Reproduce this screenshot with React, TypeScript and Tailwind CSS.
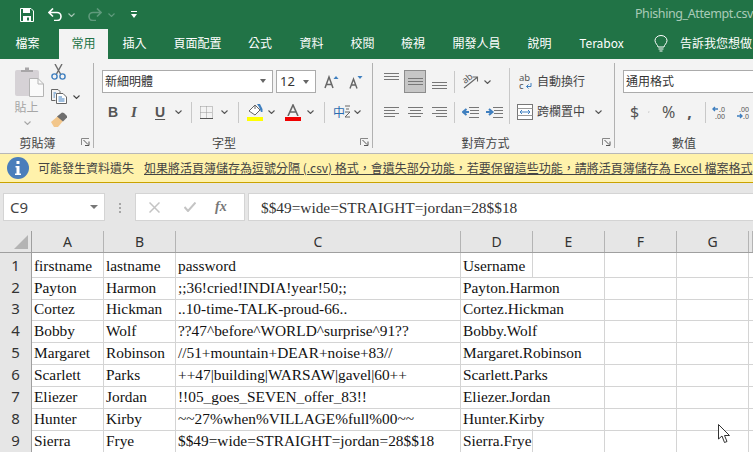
import React from 'react';

const UI_FONT = "font-['Noto_Sans_CJK_TC','Noto_Sans',sans-serif]";

const rows = [
  ['firstname', 'lastname', 'password', 'Username'],
  ['Payton', 'Harmon', ';;36!cried!INDIA!year!50;;', 'Payton.Harmon'],
  ['Cortez', 'Hickman', '..10-time-TALK-proud-66..', 'Cortez.Hickman'],
  ['Bobby', 'Wolf', '??47^before^WORLD^surprise^91??', 'Bobby.Wolf'],
  ['Margaret', 'Robinson', '//51+mountain+DEAR+noise+83//', 'Margaret.Robinson'],
  ['Scarlett', 'Parks', '++47|building|WARSAW|gavel|60++', 'Scarlett.Parks'],
  ['Eliezer', 'Jordan', '!!05_goes_SEVEN_offer_83!!', 'Eliezer.Jordan'],
  ['Hunter', 'Kirby', '~~27%when%VILLAGE%full%00~~', 'Hunter.Kirby'],
  ['Sierra', 'Frye', '$$49=wide=STRAIGHT=jordan=28$$18', 'Sierra.Frye'],
];

const tabs = [
  { label: '檔案', cls: 'w-[55px] mr-[4px]' },
  { label: '常用', cls: 'w-[49px] bg-[#f3f3f3] text-[#217346]' },
  { label: '插入', cls: 'w-[53px]' },
  { label: '頁面配置', cls: 'w-[73px]' },
  { label: '公式', cls: 'w-[52px]' },
  { label: '資料', cls: 'w-[51px]' },
  { label: '校閱', cls: 'w-[51px]' },
  { label: '檢視', cls: 'w-[50px]' },
  { label: '開發人員', cls: 'w-[77px]' },
  { label: '說明', cls: 'w-[49px]' },
  { label: 'Terabox', cls: 'w-[75px]' },
];

function Chevron({ className = '', color = '#555' }: { className?: string; color?: string }) {
  return (
    <svg width="7" height="4" viewBox="0 0 7 4" className={className}>
      <path d="M0.5 0.5 L3.5 3.5 L6.5 0.5" fill="none" stroke={color} strokeWidth="1.1" />
    </svg>
  );
}

function Launcher() {
  return (
    <svg width="9" height="8" viewBox="0 0 9 8">
      <path d="M0.5 7 V0.5 H8" fill="none" stroke="#888" />
      <path d="M2.5 2 L7 6.5 M4 7.5 H8 V3.5" fill="none" stroke="#555" />
    </svg>
  );
}

function Lines({ widths, color = '#777', gap = 3 }: { widths: number[]; color?: string; gap?: number }) {
  return (
    <svg width="15" height={(widths.length - 1) * gap + 1}>
      {widths.map((w, i) => (
        <rect key={i} x={(15 - w) / 2} y={i * gap} width={w} height="1" fill={color} />
      ))}
    </svg>
  );
}

function AlignH({ side }: { side: 'left' | 'center' | 'right' }) {
  const short = [15, 11, 15, 11];
  return (
    <svg width="15" height="11">
      {short.map((w, i) => {
        const x = side === 'left' ? 0 : side === 'right' ? 15 - w : (15 - w) / 2;
        return <rect key={i} x={x} y={i * 3} width={w} height="1" fill="#777" />;
      })}
    </svg>
  );
}

function Indent({ flip }: { flip?: boolean }) {
  return (
    <svg width="17" height="11" viewBox="0 0 17 11">
      <g fill="#777">
        <rect x="7" y="0" width="10" height="1" />
        <rect x="8" y="3" width="9" height="1" />
        <rect x="8" y="6" width="9" height="1" />
        <rect x="7" y="10" width="10" height="1" />
      </g>
      {flip ? (
        <path d="M0 5 H5 M3 2 L6.5 5 L3 8" fill="none" stroke="#3f7fbf" strokeWidth="2" />
      ) : (
        <path d="M7 5 H2 M4.5 2 L1 5 L4.5 8" fill="none" stroke="#3f7fbf" strokeWidth="2" />
      )}
    </svg>
  );
}

function VSep({ className = '' }: { className?: string }) {
  return <div className={`w-px bg-[#c8c8c8] ${className}`} />;
}

function GroupLabel({ text, launcher, className = '' }: { text: string; launcher?: boolean; className?: string }) {
  return (
    <div className={`absolute bottom-0 left-0 right-0 h-[19px] pb-[2px] flex items-center justify-center text-[12px] text-[#444] ${className}`}>
      <span>{text}</span>
      {launcher && (
        <span className="absolute right-[3px] top-[4px] flex">
          <Launcher />
        </span>
      )}
    </div>
  );
}

function ClipboardGroup() {
  return (
    <div className="relative w-[93px] h-full flex shrink-0">
      <div className="w-[51px] pl-[15px] pt-[8px] flex flex-col">
        <svg width="29" height="30" viewBox="0 0 29 30">
          <rect x="0" y="3" width="24" height="26" rx="2" fill="#d6d2d6" />
          <path d="M6 5 V3 H10 V0.5 H14 V3 H18 V5 Z" fill="#a8a6a8" />
          <path d="M14.5 11.5 H23 L28.5 17 V29.5 H14.5 Z" fill="#fafafa" stroke="#b4b4b4" />
          <path d="M23 11.5 V17 H28.5" fill="none" stroke="#b4b4b4" />
        </svg>
        <div className="text-[12px] leading-[14px] text-[#a6a6a6] mt-[3px] -ml-[0.5px]">貼上</div>
        <Chevron className="mt-[7px] ml-[9px]" color="#a6a6a6" />
      </div>
      <div className="pt-[5px] flex flex-col">
        <svg width="15" height="16" viewBox="0 0 15 16">
          <path d="M4 0 L9.5 10 M11 0 L5.5 10" stroke="#6b6b6b" strokeWidth="1.4" fill="none" />
          <circle cx="3.5" cy="12.5" r="2.6" fill="none" stroke="#3f7fbf" strokeWidth="1.4" />
          <circle cx="11.5" cy="12.5" r="2.6" fill="none" stroke="#3f7fbf" strokeWidth="1.4" />
        </svg>
        <div className="flex items-center mt-[9px]">
          <svg width="16" height="15" viewBox="0 0 16 15">
            <path d="M0.5 0.5 H7 L9 2.5 V4 M4.5 11.5 H0.5 V0.5" fill="none" stroke="#666" />
            <path d="M5.5 4.5 H12 L15.5 8 V14.5 H5.5 Z" fill="#fff" stroke="#666" />
            <path d="M7.5 8 H11 M7.5 10 H13.5 M7.5 12 H13.5 M2.5 4 H5 M2.5 6 H4 M2.5 8 H4" stroke="#3f7fbf" />
          </svg>
          <Chevron className="ml-[6px]" color="#444" />
        </div>
        <svg width="17" height="15" viewBox="0 0 17 15" className="mt-[8px]">
          <path d="M0 10 L7 4 L12 9 L7 15 L3 15 Z" fill="#f2c68b" />
          <path d="M6 4.5 L11 0.5 L13 1 L16 4 L16 5.5 L12 9.5 Z" fill="#6e6e6e" />
        </svg>
      </div>
      <GroupLabel text="剪貼簿" launcher className="pr-[18px]" />
    </div>
  );
}

function FontGroup() {
  return (
    <div className="relative w-[278px] h-full pt-[11px] pl-[8px] shrink-0">
      <div className="flex items-center h-[23px]">
        <div className="w-[171px] h-[23px] bg-white border border-[#ababab] flex items-center justify-between pl-[2px] pr-[6px] pb-[2px] text-[12px] text-[#333]">
          <span>新細明體</span>
          <span className="w-0 h-0 border-x-[3.5px] border-x-transparent border-t-[4px] border-t-[#666]" />
        </div>
        <div className="w-[40px] h-[23px] ml-[3px] bg-white border border-[#ababab] flex items-center justify-between pl-[3px] pr-[6px] text-[13px] text-[#333]">
          <span className="font-['Noto_Sans',sans-serif]">12</span>
          <span className="w-0 h-0 border-x-[3.5px] border-x-transparent border-t-[4px] border-t-[#666]" />
        </div>
        <svg width="15" height="14" viewBox="0 0 15 14" className="ml-[8px]">
          <path d="M1 13 L5 2 L9 13 M2.5 9.5 H7.5" fill="none" stroke="#666" strokeWidth="1.5" />
          <path d="M9.5 4 L12 1 L14.5 4 Z" fill="#3f7fbf" />
        </svg>
        <svg width="14" height="14" viewBox="0 0 14 14" className="ml-[10px]">
          <path d="M1 13.5 L4.5 4 L8 13.5 M2 10 H7" fill="none" stroke="#666" strokeWidth="1.4" />
          <path d="M8.5 1 L11 4 L13.5 1 Z" fill="#3f7fbf" />
        </svg>
      </div>
      <div className="flex items-center h-[24px] mt-[7px] text-[#555]">
        <span className="w-[9px] ml-[6px] font-['Liberation_Sans',sans-serif] font-bold text-[14px] leading-none">B</span>
        <span className="w-[9px] ml-[14px] font-['Liberation_Serif',serif] italic font-bold text-[15px] leading-none">I</span>
        <span className="w-[10px] ml-[15px] font-['Liberation_Sans',sans-serif] font-bold text-[14px] leading-none underline underline-offset-2">U</span>
        <Chevron className="ml-[10px]" />
        <VSep className="h-[21px] ml-[9px]" />
        <svg width="13" height="13" viewBox="0 0 13 13" className="ml-[8px]">
          <path d="M0.5 0.5 H12.5 M0.5 6.5 H12.5 M0.5 0.5 V12.5 M6.5 0.5 V12.5 M12.5 0.5 V12.5" fill="none" stroke="#999" strokeDasharray="1 1" />
          <path d="M0 12.5 H13" stroke="#555" />
        </svg>
        <Chevron className="ml-[8px]" />
        <VSep className="h-[21px] ml-[10px]" />
        <div className="ml-[7px] w-[17px] flex flex-col items-center">
          <svg width="16" height="13" viewBox="0 0 16 13">
            <path d="M2 7 L8 1 L13 6 L8 11 Z" fill="#fff" stroke="#666" />
            <path d="M8 1 V5" stroke="#666" />
            <path d="M10 0 H13 L15.5 5 V8 H14 L12 3 Z" fill="#3f7fbf" />
          </svg>
          <div className="w-[16px] h-[4px] bg-[#ffff00]" />
        </div>
        <Chevron className="ml-[5px]" />
        <div className="ml-[10px] w-[16px] flex flex-col items-center">
          <svg width="12" height="12" viewBox="0 0 12 12">
            <path d="M1 12 L6 1 L11 12 M3 8 H9" fill="none" stroke="#666" strokeWidth="1.6" />
          </svg>
          <div className="w-[16px] h-[4px] bg-[#f00000] mt-[1px]" />
        </div>
        <Chevron className="ml-[6px]" />
        <VSep className="h-[21px] ml-[10px]" />
        <span className="ml-[8px] text-[12px] leading-none text-[#2b6cb0]">中</span>
        <svg width="5" height="14" viewBox="0 0 5 14">
          <path d="M0 1 H5 M1 4 L4 4 M0 7 H5 L0 12 H5" fill="none" stroke="#666" />
        </svg>
        <Chevron className="ml-[4px]" />
      </div>
      <GroupLabel text="字型" launcher className="pr-[18px]" />
    </div>
  );
}

function AlignmentGroup() {
  return (
    <div className="relative w-[241px] h-full pt-[11px] pl-[11px] shrink-0">
      <div className="flex items-center h-[23px]">
        <div className="w-[15px] h-[23px] pt-[3px]">
          <Lines widths={[15, 15, 15]} />
        </div>
        <div className="w-[22px] h-[23px] ml-[5px] bg-[#c6c6c6] border border-[#8c8c8c] flex items-center justify-center">
          <Lines widths={[15, 15, 15]} />
        </div>
        <div className="w-[15px] h-[23px] ml-[6px] pt-[12px]">
          <Lines widths={[15, 15, 15]} />
        </div>
        <VSep className="h-[22px] ml-[7px]" />
        <svg width="17" height="18" viewBox="0 0 17 18" className="ml-[7px] -mt-[1px] overflow-visible">
          <text x="1" y="10" fontSize="9" fill="#555" fontFamily="Noto Sans" transform="rotate(-38 5 8)">ab</text>
          <path d="M2 16 L15 5.5 M10.5 5 H15.5 V9.5" fill="none" stroke="#666" strokeWidth="1.1" />
        </svg>
        <Chevron className="ml-[5px]" />
      </div>
      <div className="flex items-center h-[24px] mt-[7px]">
        <AlignH side="left" />
        <div className="ml-[9px]"><AlignH side="center" /></div>
        <div className="ml-[9px]"><AlignH side="right" /></div>
        <VSep className="h-[21px] ml-[7px]" />
        <div className="ml-[7px] flex"><Indent /></div>
        <div className="ml-[7px] flex"><Indent flip /></div>
      </div>
      <div className="absolute left-[136px] top-[9px] w-px h-[56px] bg-[#c8c8c8]" />
      <div className="absolute left-[146px] top-[11px] h-[23px] pb-[2px] flex items-center text-[12px] text-[#444]">
        <svg width="13" height="16" viewBox="0 0 13 16" className="mt-[2px] overflow-visible">
          <text x="0" y="7" fontSize="9.5" fill="#555" fontFamily="Noto Sans">ab</text>
          <text x="0" y="15" fontSize="9.5" fill="#555" fontFamily="Noto Sans">c</text>
          <path d="M12 9 V12.5 H7.5 M9.5 10.5 L7.5 12.5 L9.5 14.5" fill="none" stroke="#3f7fbf" />
        </svg>
        <span className="ml-[5px]">自動換行</span>
      </div>
      <div className="absolute left-[144px] top-[41px] h-[24px] flex items-center text-[12px] text-[#444]">
        <svg width="16" height="16" viewBox="0 0 16 16">
          <rect x="0.5" y="0.5" width="15" height="15" fill="#fff" stroke="#777" />
          <path d="M0.5 4.5 H15.5 M0.5 11.5 H15.5" stroke="#999" />
          <path d="M3 8 H13 M5 6 L3 8 L5 10 M11 6 L13 8 L11 10" fill="none" stroke="#3f7fbf" />
        </svg>
        <span className="ml-[4px] pb-[2px]">跨欄置中</span>
        <Chevron className="ml-[10px]" />
      </div>
      <GroupLabel text="對齊方式" launcher className="pr-[16px]" />
    </div>
  );
}

function NumberGroup() {
  return (
    <div className="relative flex-1 h-full pt-[11px] pl-[8px] overflow-hidden">
      <div className="w-[140px] h-[23px] bg-white border border-[#ababab] flex items-center pl-[2px] pb-[2px] text-[12px] text-[#333]">
        通用格式
      </div>
      <div className="flex items-center h-[24px] mt-[7px] text-[#555] font-['Noto_Sans',sans-serif]">
        <span className="ml-[7px] w-[9px] text-[16px] leading-none">$</span>
        <Chevron className="ml-[9px]" />
        <span className="ml-[12px] w-[15px] text-[16px] leading-none">%</span>
        <span className="ml-[12px] w-[6px] text-[16px] font-bold leading-none">,</span>
        <VSep className="h-[21px] ml-[13px]" />
        <svg width="17" height="13" viewBox="0 0 17 13" className="ml-[7px] overflow-visible">
          <path d="M6 3 H1 M3 1 L1 3 L3 5" fill="none" stroke="#3f7fbf" strokeWidth="1.4" />
          <text x="7" y="6" fontSize="7" fill="#555" fontFamily="Noto Sans">.0</text>
          <text x="3" y="13" fontSize="7" fill="#555" fontFamily="Noto Sans">.00</text>
        </svg>
        <svg width="17" height="13" viewBox="0 0 17 13" className="ml-[7px] overflow-visible">
          <text x="3" y="6" fontSize="7" fill="#555" fontFamily="Noto Sans">.00</text>
          <path d="M1 10 H6 M4 8 L6 10 L4 12" fill="none" stroke="#3f7fbf" strokeWidth="1.4" />
          <text x="7" y="13" fontSize="7" fill="#555" fontFamily="Noto Sans">.0</text>
        </svg>
      </div>
      <GroupLabel text="數值" className="w-[138px]" />
    </div>
  );
}

function Ribbon() {
  return (
    <div className="h-[94px] bg-[#f3f3f3] flex shrink-0">
      <ClipboardGroup />
      <div className="w-px h-[85px] mt-[4px] bg-[#b1b1b1] shrink-0" />
      <FontGroup />
      <div className="w-px h-[85px] mt-[4px] bg-[#b1b1b1] shrink-0" />
      <AlignmentGroup />
      <div className="w-px h-[85px] mt-[4px] bg-[#b1b1b1] shrink-0" />
      <NumberGroup />
    </div>
  );
}

function FormulaBar() {
  return (
    <div className="h-[48px] bg-[#e6e6e6] pt-[10px] flex shrink-0">
      <div className="ml-[3px] w-[102px] h-[28px] bg-white border border-[#d4d4d4] flex items-center justify-between pl-[6px] pr-[6px] text-[15px] text-[#444] font-['Noto_Sans',sans-serif]">
        <span className="pt-[1px]">C9</span>
        <span className="w-0 h-0 border-x-[4px] border-x-transparent border-t-[4px] border-t-[#777]" />
      </div>
      <div className="w-[30px] flex flex-col items-center justify-center gap-[2px] pb-[8px]">
        <span className="w-[2px] h-[2px] bg-[#a6a6a6]" />
        <span className="w-[2px] h-[2px] bg-[#a6a6a6]" />
        <span className="w-[2px] h-[2px] bg-[#a6a6a6]" />
      </div>
      <div className="w-[110px] h-[28px] bg-white border border-[#d4d4d4] flex items-center">
        <svg width="11" height="11" viewBox="0 0 11 11" className="ml-[13px]">
          <path d="M0.5 0.5 L10.5 10.5 M10.5 0.5 L0.5 10.5" stroke="#c4c4c4" strokeWidth="1.5" />
        </svg>
        <svg width="12" height="10" viewBox="0 0 12 10" className="ml-[24px]">
          <path d="M0.5 5 L4 9 L11.5 0.5" fill="none" stroke="#c4c4c4" strokeWidth="2" />
        </svg>
        <span className="ml-[19px] font-['Liberation_Serif',serif] italic font-bold text-[14px] leading-none text-[#777]">fx</span>
      </div>
      <div className="ml-[3px] flex-1 h-[28px] bg-white border-y border-l border-[#d4d4d4] flex items-center pl-[12px] pt-[1px] text-[15.35px] text-[#333] font-['Liberation_Serif',serif] whitespace-nowrap">
        $$49=wide=STRAIGHT=jordan=28$$18
      </div>
    </div>
  );
}

function Sheet() {
  const colCls = 'grid grid-cols-[32px_72px_72px_285px_72px_72px_72px_72px_4px]';
  const headers = ['A', 'B', 'C', 'D', 'E', 'F', 'G', ''];
  return (
    <div className="flex-1 bg-white overflow-hidden">
      <div className={`${colCls} h-[22px] bg-[#e6e6e6] border-b border-[#9f9f9f]`}>
        <div className="border-r border-[#9f9f9f] flex justify-end items-end pr-[3px] pb-[3px]">
          <div className="w-0 h-0 border-l-[14px] border-l-transparent border-b-[14px] border-b-[#b4b4b4]" />
        </div>
        {headers.map((h, i) => (
          <div key={i} className="border-r border-[#b4b4b4] flex items-center justify-center text-[14px] text-[#333] font-['Noto_Sans',sans-serif]">
            {h}
          </div>
        ))}
      </div>
      {rows.map((r, i) => {
        // Long usernames spill over column E, so D loses its right edge on those rows
        const spills = r[3].length > 9 && i !== 8;
        return (
          <div key={i} className={`${colCls} ${i === 0 ? 'h-[23px]' : i === 1 ? 'h-[21px]' : 'h-[22px]'} font-['Liberation_Serif',serif] text-[15.35px] text-[#111]`}>
            <div className="bg-[#e6e6e6] border-r border-b border-r-[#9f9f9f] border-b-[#c8c8c8] flex items-center justify-center text-[15px] text-[#333] font-['Noto_Sans',sans-serif]">
              {i + 1}
            </div>
            {r.map((cell, j) => (
              <div
                key={j}
                className={`border-b border-[#d4d4d4] pl-[2px] flex items-center whitespace-nowrap ${i === 0 ? 'pt-[1px]' : ''} ${j === 3 && spills ? '' : 'border-r'}`}
              >
                {cell}
              </div>
            ))}
            <div className="border-r border-b border-[#d4d4d4]" />
            <div className="border-r border-b border-[#d4d4d4]" />
            <div className="border-r border-b border-[#d4d4d4]" />
            <div className="border-b border-[#d4d4d4]" />
          </div>
        );
      })}
    </div>
  );
}

export default function App() {
  return (
    <div className={`relative w-[753px] h-[452px] overflow-hidden flex flex-col bg-white ${UI_FONT}`}>
      <div className="h-[29px] bg-[#217346] flex items-center shrink-0">
        <svg width="14" height="14" viewBox="0 0 14 14" className="ml-[20px]">
          <path d="M0.5 0.5 H11 L13.5 3 V13.5 H0.5 Z" fill="none" stroke="#fff" />
          <path d="M3 1 H10 V5 H3 Z M3 8 H11 V13 H3 Z" fill="#fff" />
          <rect x="7" y="9.5" width="2" height="3" fill="#217346" />
        </svg>
        <svg width="15" height="13" viewBox="0 0 15 13" className="ml-[14px]">
          <path d="M5 0.5 L1 4.5 L5 8.5 M1.5 4.5 H9 A4 4 0 0 1 9 12.5 H6" fill="none" stroke="#fff" strokeWidth="1.6" />
        </svg>
        <Chevron className="ml-[5px]" color="#a6c7b5" />
        <svg width="15" height="13" viewBox="0 0 15 13" className="ml-[12px]">
          <path d="M10 0.5 L14 4.5 L10 8.5 M13.5 4.5 H6 A4 4 0 0 0 6 12.5 H9" fill="none" stroke="#5f9a7c" strokeWidth="1.6" />
        </svg>
        <Chevron className="ml-[6px]" color="#5f9a7c" />
        <svg width="6" height="7" viewBox="0 0 6 7" className="ml-[16px]">
          <rect x="0" y="0" width="6" height="1" fill="#fff" />
          <path d="M0 3 H6 L3 7 Z" fill="#fff" />
        </svg>
        <span className="ml-auto whitespace-nowrap text-[12.5px] tracking-[-0.4px] text-[#a9cbb8] font-['Noto_Sans',sans-serif]">
          Phishing_Attempt.csv
        </span>
      </div>
      <div className="h-[30px] bg-[#217346] flex items-stretch shrink-0 whitespace-nowrap text-[12px] text-white">
        {tabs.map((t) => (
          <div key={t.label} className={`flex items-center justify-center pb-[2px] shrink-0 ${t.cls}`}>
            {t.label}
          </div>
        ))}
        <svg width="14" height="18" viewBox="0 0 14 18" className="ml-[15px] self-center shrink-0">
          <path d="M4 12 C4 10 1 8.5 1 5.5 A6 5 0 0 1 13 5.5 C13 8.5 10 10 10 12 Z" fill="none" stroke="#fff" />
          <path d="M4.5 14 H9.5 M5.5 16 H8.5" stroke="#fff" />
        </svg>
        <span className="ml-[12px] pb-[2px] self-center">告訴我您想做</span>
      </div>
      <Ribbon />
      <div className="h-[30px] bg-[#fff2ab] border-t border-t-[#b8b8b8] border-b border-b-[#c9a200] flex items-center whitespace-nowrap text-[12px] text-[#444] shrink-0">
        <div className="ml-[7px] w-[22px] h-[22px] rounded-full bg-[#4a7ebb] flex items-center justify-center shrink-0">
          <svg width="6" height="14" viewBox="0 0 6 14">
            <rect x="1.5" y="0" width="3" height="3" fill="#fff" />
            <path d="M0.5 5 H4.5 V12.5 H6 V14 H0 V12.5 H1.5 V6.5 H0.5 Z" fill="#fff" />
          </svg>
        </div>
        <span className="ml-[9px]">可能發生資料遺失</span>
        <span className="ml-[10px] underline">如果將活頁簿儲存為逗號分隔 (.csv) 格式，會遺失部分功能，若要保留這些功能，請將活頁簿儲存為 Excel 檔案格式</span>
      </div>
      <FormulaBar />
      <Sheet />
      {/* mouse pointer caught in the shot */}
      <svg width="13" height="20" viewBox="0 0 13 20" className="absolute left-[718px] top-[424px]">
        <path d="M0.5 0.5 V15 L4 12 L6.5 18.5 L9 17.5 L6.5 11.5 H11.5 Z" fill="#fff" stroke="#333" />
      </svg>
    </div>
  );
}
